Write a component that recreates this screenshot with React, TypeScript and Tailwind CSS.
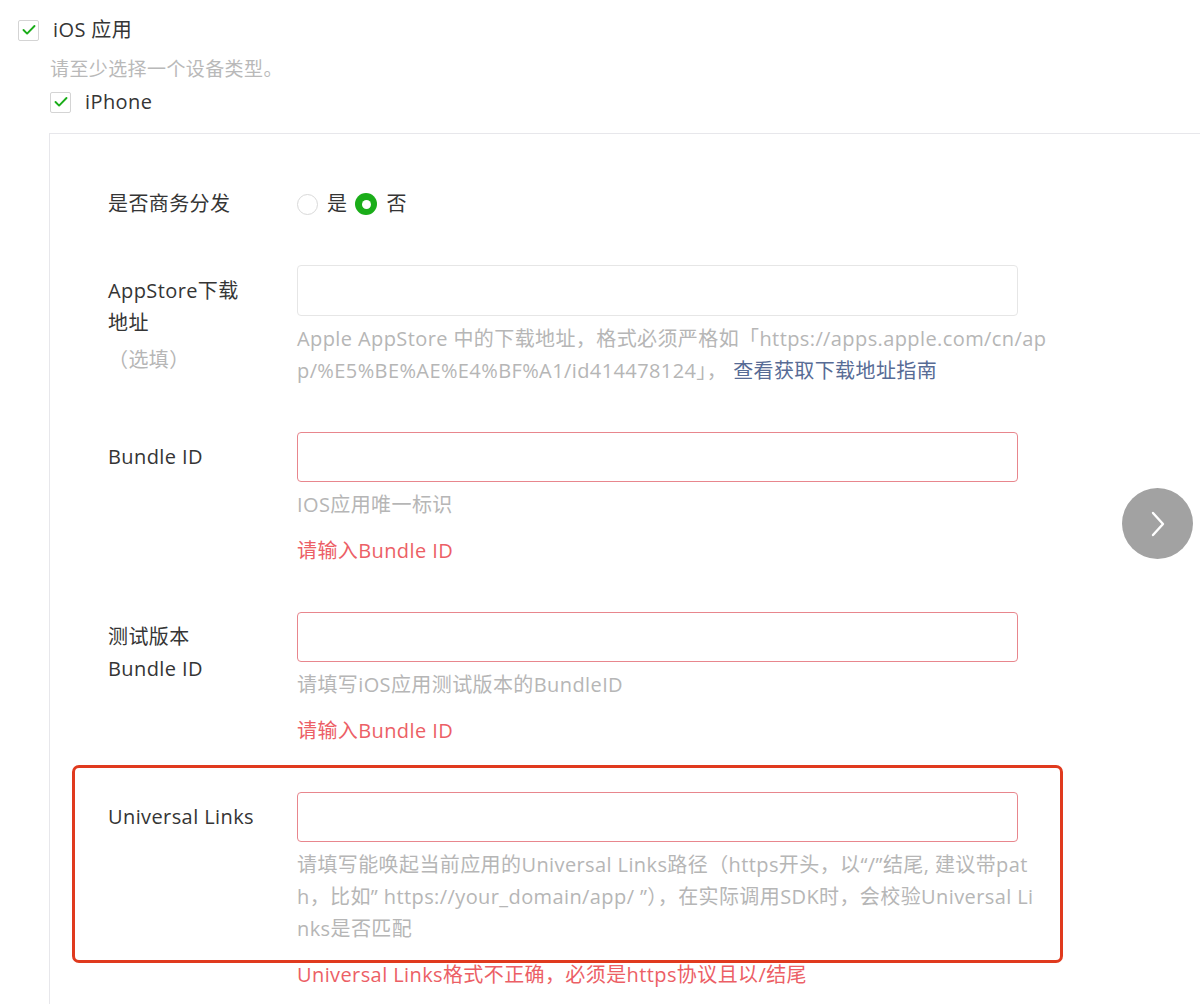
import React from "react";

const FONT = { fontFamily: '"Open Sans", "Noto Sans CJK SC", sans-serif' };

function Check({ className = "" }: { className?: string }) {
  return (
    <span
      className={`flex h-[21px] w-[21px] shrink-0 items-center justify-center rounded-[2px] border border-[#d4d4d4] bg-white ${className}`}
    >
      <svg width="16" height="16" viewBox="0 0 16 16" fill="none">
        <path d="M2.5 8l3.6 3.6 7.4-7.6" stroke="#1aad19" strokeWidth="1.9" strokeLinecap="round" strokeLinejoin="round" />
      </svg>
    </span>
  );
}

function Radio({ checked }: { checked?: boolean }) {
  if (checked) {
    return (
      <span className="flex h-[22px] w-[22px] items-center justify-center rounded-full bg-[#1aad19]">
        <span className="h-[9px] w-[9px] rounded-full bg-white" />
      </span>
    );
  }
  return <span className="h-[21px] w-[21px] rounded-full border border-[#d9d9d9] bg-white" />;
}

function Field({
  label,
  help,
  error,
  invalid,
}: {
  label: React.ReactNode;
  help: React.ReactNode;
  error?: string;
  invalid?: boolean;
}) {
  return (
    <div className="flex">
      <div className="w-[189px] shrink-0 pt-[9px] leading-8 text-[#353535]">{label}</div>
      <div className="w-[780px]">
        <div
          className={`h-[50px] w-[721px] rounded-[4px] border bg-white ${
            invalid ? "border-[#e8868d]" : "border-[#e6e6e6]"
          }`}
        />
        <div className="mt-[7px] whitespace-nowrap leading-8 text-[#b6b6b6]">{help}</div>
        {error && <div className="mt-[14px] leading-8 text-[#ec5f66]">{error}</div>}
      </div>
    </div>
  );
}

export default function App() {
  return (
    <div
      className="relative h-[1004px] w-[1200px] overflow-hidden bg-white text-[20px] tracking-[0.4px]"
      style={FONT}
    >
      <div className="pl-[18px] pt-[14px]">
        <div className="flex h-8 items-center gap-[14px] text-[#353535]">
          <Check />
          <span>iOS 应用</span>
        </div>

        <div className="ml-[31px]">
          <div className="mt-[7px] pl-[1px] text-[19px] leading-8 text-[#b9b9b9]">请至少选择一个设备类型。</div>
          <div className="mt-[1px] flex h-8 items-center gap-[14px] pl-[1px] text-[#353535]">
            <Check />
            <span>iPhone</span>
          </div>

          <div className="mt-[15px] w-[1200px] border-l border-t border-[#e7e7eb] pb-16 pl-[58px] pt-[54px]">
            <div className="flex items-center">
              <div className="w-[189px] shrink-0 leading-8 text-[#353535]">是否商务分发</div>
              <div className="flex items-center text-[#353535]">
                <Radio />
                <span className="ml-[9px] mr-[8px]">是</span>
                <Radio checked />
                <span className="ml-[9px]">否</span>
              </div>
            </div>

            <div className="mt-[45px]">
              <div className="flex">
                <div className="w-[189px] shrink-0 pt-[10px] leading-8 text-[#353535]">
                  AppStore下载
                  <br />
                  地址
                  <div className="mt-[5px] text-[#b6b6b6]">（选填）</div>
                </div>
                <div className="w-[780px]">
                  <div className="h-[51px] w-[721px] rounded-[4px] border border-[#e6e6e6] bg-white" />
                  <div className="mt-[7px] whitespace-nowrap leading-8 text-[#b6b6b6]">
                    <div>Apple AppStore 中的下载地址，格式必须严格如「https://apps.apple.com/cn/ap</div>
                    <div>
                      p/%E5%BE%AE%E4%BF%A1/id414478124」，
                      <a className="ml-[6px] text-[#576b95]">查看获取下载地址指南</a>
                    </div>
                  </div>
                </div>
              </div>
            </div>

            <div className="mt-[45px]">
              <Field label="Bundle ID" help="IOS应用唯一标识" error="请输入Bundle ID" invalid />
            </div>

            <div className="mt-[45px]">
              <Field
                label={
                  <>
                    测试版本
                    <br />
                    Bundle ID
                  </>
                }
                help="请填写iOS应用测试版本的BundleID"
                error="请输入Bundle ID"
                invalid
              />
            </div>

            <div className="relative mt-[45px]">
              <Field
                label="Universal Links"
                help={
                  <>
                    <div>请填写能唤起当前应用的Universal Links路径（https开头，以“/”结尾, 建议带pat</div>
                    <div>h，比如” https://your_domain/app/ ”），在实际调用SDK时，会校验Universal Li</div>
                    <div>nks是否匹配</div>
                  </>
                }
                error="Universal Links格式不正确，必须是https协议且以/结尾"
                invalid
              />
              <div className="pointer-events-none absolute left-[-36px] top-[-27px] h-[198px] w-[991px] rounded-[7px] border-[3px] border-[#e03a1e]" />
            </div>
          </div>
        </div>
      </div>

      <button className="fixed left-[1122px] top-[488px] flex h-[71px] w-[71px] items-center justify-center rounded-full bg-[#a2a2a2]">
        <svg width="16" height="26" viewBox="0 0 16 26" fill="none">
          <path d="M3 2l10 11-10 11" stroke="white" strokeWidth="2.4" strokeLinecap="round" strokeLinejoin="round" />
        </svg>
      </button>
    </div>
  );
}
